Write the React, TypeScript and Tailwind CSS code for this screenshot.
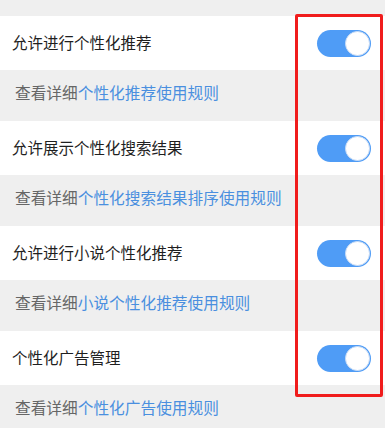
const items = [
  { title: "允许进行个性化推荐", link: "个性化推荐使用规则" },
  { title: "允许展示个性化搜索结果", link: "个性化搜索结果排序使用规则" },
  { title: "允许进行小说个性化推荐", link: "小说个性化推荐使用规则" },
  { title: "个性化广告管理", link: "个性化广告使用规则" },
];

const Toggle = () => (
  <div className="flex h-[27px] w-[54px] items-center justify-end rounded-full bg-[#4f9cf6] p-px">
    <div className="h-[25px] w-[25px] rounded-full border border-[#c9dcf5] bg-white" />
  </div>
);

export default function App() {
  return (
    <div
      className="relative h-[428px] w-[385px] overflow-hidden bg-[#efefef] pt-4"
      style={{ fontFamily: '"Noto Sans CJK SC", "Noto Sans", sans-serif' }}
    >
      {items.map((item) => (
        <div key={item.title}>
          <div className="flex h-[54px] items-center justify-between bg-white pl-3 pr-[14px]">
            <span className="text-[15.5px] text-[#1f1f1f]">{item.title}</span>
            <Toggle />
          </div>
          <div className="flex h-[51px] items-center pb-[5px] pl-[15px] text-[15.7px]">
            <span className="text-[#666666]">查看详细</span>
            <span className="text-[#4a8fdf]">{item.link}</span>
          </div>
        </div>
      ))}
      {/* red highlight frame */}
      <div className="absolute left-[295px] top-[14px] h-[383px] w-[88px] rounded-[2px] border-[3px] border-[#f01c1c]" />
    </div>
  );
}
